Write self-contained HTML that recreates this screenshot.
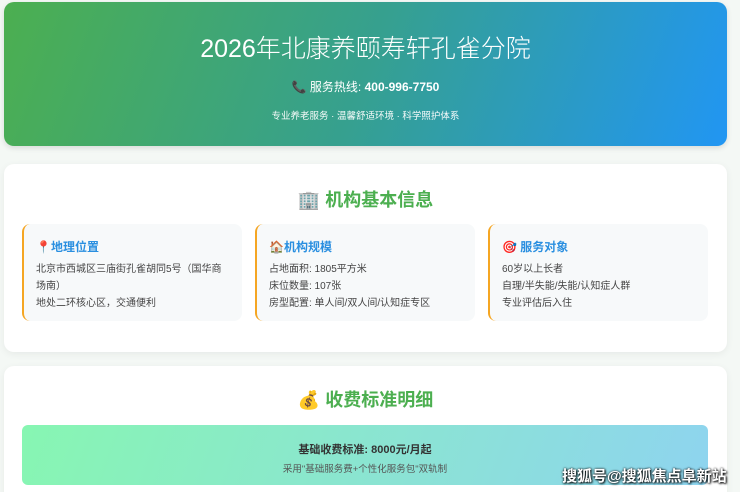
<!DOCTYPE html>
<html><head><meta charset="utf-8"><style>
*{margin:0;padding:0;box-sizing:border-box}
html,body{width:740px;height:492px;overflow:hidden}
body{background:#f4f8f5;font-family:"Liberation Sans","Noto Sans CJK SC",sans-serif;position:relative}
.hdr{position:absolute;left:4px;top:2px;width:723px;height:144px;border-radius:10px;background:linear-gradient(110deg,#4caf50 0%,#36a08f 50%,#2196f3 100%);color:#fff;text-align:center;box-shadow:0 2px 6px rgba(0,0,0,.12)}
.hdr h1{font-weight:300;font-size:25px;margin-top:31px;line-height:32px}
.hdr .tel{font-size:12px;margin-top:13px}
.hdr .sub{font-size:9.5px;margin-top:13px;opacity:.95}
.card{position:absolute;left:4px;width:723px;background:#fff;border-radius:10px;box-shadow:0 2px 8px rgba(0,0,0,.06)}
.card h2{text-align:center;color:#4caf50;font-size:18px;font-weight:bold}
.box{position:absolute;top:60px;width:220px;height:97px;background:#f7f9fa;border-radius:8px;border-left:2px solid #f5a623;padding:14px 16px 0 12px}
.box h3{color:#2a8fe0;font-size:12px;font-weight:bold;margin-bottom:6px}
.box p{font-size:10px;color:#444;line-height:17px}
.fee{position:absolute;left:18px;top:59px;width:686px;height:60px;border-radius:6px;background:linear-gradient(110deg,#87f6b2,#8ed4ef);text-align:center}
.wm{position:absolute;left:562px;top:465px;color:#fff;font-size:15px;font-weight:bold;text-shadow:0 0 2px #000,1px 1px 2px #000}
</style></head><body>
<div class="hdr">
<h1>2026年北康养颐寿轩孔雀分院</h1>
<div class="tel"><span style="color:#c62828">📞</span> 服务热线: <b>400-996-7750</b></div>
<div class="sub">专业养老服务 · 温馨舒适环境 · 科学照护体系</div>
</div>
<div class="card" style="top:164px;height:188px">
<h2 style="margin-top:22px">🏢 机构基本信息</h2>
<div class="box" style="left:18px"><h3>📍地理位置</h3><p>北京市西城区三庙街孔雀胡同5号（国华商场南）<br>地处二环核心区，交通便利</p></div>
<div class="box" style="left:251px"><h3>🏠机构规模</h3><p>占地面积: 1805平方米<br>床位数量: 107张<br>房型配置: 单人间/双人间/认知症专区</p></div>
<div class="box" style="left:484px"><h3>🎯 服务对象</h3><p>60岁以上长者<br>自理/半失能/失能/认知症人群<br>专业评估后入住</p></div>
</div>
<div class="card" style="top:366px;height:140px">
<h2 style="margin-top:20px">💰 收费标准明细</h2>
<div class="fee"><div style="font-size:11px;font-weight:bold;color:#333;margin-top:16px">基础收费标准: 8000元/月起</div><div style="font-size:9.5px;color:#555;margin-top:4px">采用"基础服务费+个性化服务包"双轨制</div></div>
</div>
<div class="wm">搜狐号@搜狐焦点阜新站</div>
</body></html>
